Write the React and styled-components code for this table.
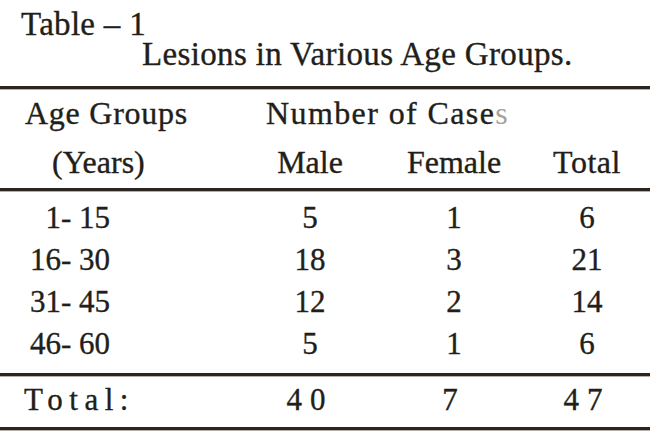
import React from "react";
import styled, { createGlobalStyle } from "styled-components";

const GlobalStyle = createGlobalStyle`
  body {
    margin: 0;
    background: #fff;
  }
`;

const Page = styled.div`
  width: 650px;
  height: 445px;
  overflow: hidden;
  font-family: "Liberation Serif", "Times New Roman", serif;
  color: #221e19;
  background: #fff;
  -webkit-text-stroke: 0.35px #221e19;
`;

const Heading = styled.div`
  padding-top: 9px;
  margin-bottom: 17px;
  font-size: 33px;
  line-height: 30px;
`;

const TableNo = styled.div`
  padding-left: 21px;
  letter-spacing: 0.3px;
`;

const Caption = styled.div`
  padding-left: 142px;
  letter-spacing: 0.35px;
`;

const Rule = styled.div`
  height: 3px;
  background: #2a2520;
  box-shadow: 0 1px 0 rgba(120, 110, 95, 0.55);
`;

const Row = styled.div`
  display: grid;
  grid-template-columns: 240px 140px 148px 118px;
  font-size: ${(p) => p.$size || 31}px;
  line-height: ${(p) => p.$height || 42}px;
  letter-spacing: ${(p) => p.$spacing || 0}px;
`;

const Cell = styled.div`
  white-space: nowrap;
  text-align: ${(p) => p.$align || "center"};
  padding-left: ${(p) => p.$left || 0}px;
  padding-right: ${(p) => p.$right || 0}px;
  grid-column: ${(p) => p.$span || "auto"};
  letter-spacing: ${(p) => (p.$spread != null ? `${p.$spread}px` : "inherit")};
`;

const Faded = styled.span`
  color: #a7a199;
  -webkit-text-stroke: 0;
`;

const Body = styled.div`
  padding-top: 6px;
  margin-bottom: 8px;
`;

const Footer = styled.div`
  padding-top: 3px;
  margin-bottom: 6px;
`;

const rows = [
  { age: "1- 15", male: 5, female: 1, total: 6 },
  { age: "16- 30", male: 18, female: 3, total: 21 },
  { age: "31- 45", male: 12, female: 2, total: 14 },
  { age: "46- 60", male: 5, female: 1, total: 6 },
];

export default function App() {
  return (
    <Page>
      <GlobalStyle />
      <Heading>
        <TableNo>Table – 1</TableNo>
        <Caption>Lesions in Various Age Groups.</Caption>
      </Heading>
      <Rule />
      <Row $size={32} $height={48} $spacing={0.75}>
        <Cell $align="left" $left={25}>
          Age Groups
        </Cell>
        <Cell $align="left" $left={26} $span="2 / 5" $spread={1.4}>
          Number of Case<Faded>s</Faded>
        </Cell>
      </Row>
      <Row $size={32} $height={51}>
        <Cell $align="left" $left={52}>
          (Years)
        </Cell>
        <Cell>Male</Cell>
        <Cell>Female</Cell>
        <Cell $spread={0.5}>Total</Cell>
      </Row>
      <Rule />
      <Body>
        {rows.map((r) => (
          <Row key={r.age}>
            <Cell $align="right" $right={130}>
              {r.age}
            </Cell>
            <Cell>{r.male}</Cell>
            <Cell>{r.female}</Cell>
            <Cell>{r.total}</Cell>
          </Row>
        ))}
      </Body>
      <Rule />
      <Footer>
        <Row $spacing={8}>
          <Cell $align="left" $left={24} $spread={6.5}>
            Total:
          </Cell>
          <Cell>40</Cell>
          <Cell>7</Cell>
          <Cell>47</Cell>
        </Row>
      </Footer>
      <Rule />
    </Page>
  );
}
